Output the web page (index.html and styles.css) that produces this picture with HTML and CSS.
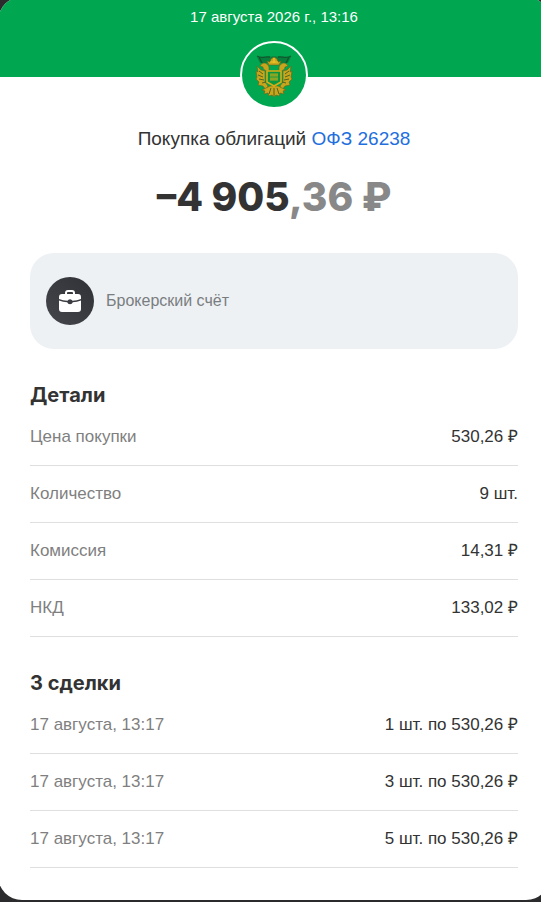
FILE: index.html
```html
<!DOCTYPE html>
<html lang="ru">
<head>
<meta charset="utf-8">
<meta name="viewport" content="width=device-width, initial-scale=1">
<title>Покупка облигаций</title>
<link rel="stylesheet" href="styles.css">
</head>
<body>
<main class="card">
  <header class="hero">
    <time class="hero-date">17 августа 2026 г., 13:16</time>
    <div class="emblem">
      <svg viewBox="0 0 64 64" width="64" height="64" aria-hidden="true">
        <path d="M15 14c5 2 8-1 12 0 4-1 6-1 10 0 4-1 7 2 12 0l-3 6H18z" fill="#07803c"/>
        <path d="M15 13c5 3 8 0 13 1M36 14c5-1 8 2 13-1M17 14l3 6M47 14l-3 6" fill="none" stroke="#12552d" stroke-width="1.3"/>
        <g fill="#c9a51d" stroke="#69671a" stroke-width=".6">
          <path d="M27 22l-2-4 3 1 1-3 3-2 3 2 1 3 3-1-2 4z"/>
          <path d="M27 24c-2-5-7-5-9-1l3 1c0 3 3 4 6 4zM37 24c2-5 7-5 9-1l-3 1c0 3-3 4-6 4z"/>
          <path d="M19 27l-4-4 1 6-2-1 1 6-1 2 3 3-1 3 5 1 3 4 2-4-3-4V28zM45 27l4-4-1 6 2-1-1 6 1 2-3 3 1 3-5 1-3 4-2-4 3-4V28z"/>
          <path d="M28 43l-8 4 3 1-1 3 4-1 1 3 3-1 2 2 2-2 3 1 1-3 4 1-1-3 3-1-8-4z"/>
        </g>
        <path d="M25 28h14v11l-7 4-7-4z" fill="#0b973f" stroke="#d9ad16" stroke-width="1.6"/>
        <path d="M29 30v8M31 30v8M33 30v8M35 30v8M28 32h8M28 36h8" fill="none" stroke="#d4ad18" stroke-width=".8"/>
        <path d="M17 28l4 3M16 32l5 2M17 36l5 1M20 40l4-1M47 28l-4 3M48 32l-5 2M47 36l-5 1M44 40l-4-1M29 45l-2 6M32 45v8M35 45l2 6" fill="none" stroke="#425e20" stroke-width=".9"/>
        <path d="M28 19h8M32 15v5" stroke="#f0c52a" stroke-width="1.2"/>
      </svg>
    </div>
  </header>
  <div class="content">
    <p class="title">Покупка облигаций <a href="#bond">ОФЗ 26238</a></p>
    <h1 class="amount">–4 905<span>,36 ₽</span></h1>
    <section class="account">
      <span class="account-icon">
        <svg viewBox="0 0 24 24" width="24" height="24" aria-hidden="true">
          <path d="M8 6V4q0-2 2-2h4q2 0 2 2v2" fill="none" stroke="#fff" stroke-width="2"/>
          <path d="M4 5h16q3 0 3 3v2q-4 1.500-8.500 1.800a2.800 2.800 0 0 0-5 0Q5 11.500 1 10V8q0-3 3-3z" fill="#fff"/>
          <path d="M1 11.500q4 1.500 8.200 1.700a2.900 2.900 0 0 0 5.600 0q4.200-.2 8.200-1.700V20q0 3-3 3H4q-3 0-3-3z" fill="#fff"/>
        </svg>
      </span>
      <span>Брокерский счёт</span>
    </section>
    <section class="group">
      <h2>Детали</h2>
      <dl>
        <div class="row"><dt>Цена покупки</dt><dd>530,26 ₽</dd></div>
        <div class="row"><dt>Количество</dt><dd>9 шт.</dd></div>
        <div class="row"><dt>Комиссия</dt><dd>14,31 ₽</dd></div>
        <div class="row"><dt>НКД</dt><dd>133,02 ₽</dd></div>
      </dl>
    </section>
    <section class="group">
      <h2>3 сделки</h2>
      <dl>
        <div class="row"><dt>17 августа, 13:17</dt><dd>1 шт. по 530,26 ₽</dd></div>
        <div class="row"><dt>17 августа, 13:17</dt><dd>3 шт. по 530,26 ₽</dd></div>
        <div class="row"><dt>17 августа, 13:17</dt><dd>5 шт. по 530,26 ₽</dd></div>
      </dl>
    </section>
  </div>
</main>
</body>
</html>
```
FILE: styles.css
```css
* {
  box-sizing: border-box;
}

body {
  margin: 0;
  overflow: hidden;
  background: #2b2b2d;
  color: #333;
  font-family: "Liberation Sans", Arial, sans-serif;
}

.card {
  margin: -3px -9px 2px -2px;
  border-radius: 24px;
  overflow: hidden;
  background: #fff;
}

.hero {
  display: flex;
  flex-direction: column;
  align-items: center;
  height: 80px;
  padding-top: 10px;
  background: #00a650;
}

.hero-date {
  color: #fff;
  font-size: 15px;
  line-height: 20px;
}

.emblem {
  flex: none;
  width: 68px;
  height: 68px;
  margin-top: 14px;
  border: 2px solid #fff;
  border-radius: 50%;
  background: #00a650;
}

.emblem svg {
  display: block;
}

.content {
  padding: 48px 32px 32px;
}

.title {
  margin: 0;
  font-size: 19px;
  line-height: 28px;
  text-align: center;
}

.title a {
  color: #1f6fde;
  text-decoration: none;
}

.amount {
  margin: 20px 0 32px;
  font-family: Inter, "Liberation Sans", sans-serif;
  font-size: 39px;
  font-weight: 800;
  line-height: 48px;
  text-align: center;
}

.amount span {
  color: #888;
}

.account {
  display: flex;
  align-items: center;
  gap: 12px;
  padding: 24px 16px;
  border-radius: 24px;
  background: #edf1f4;
  color: #7a7d80;
  font-size: 16px;
  line-height: 24px;
}

.account-icon {
  display: grid;
  place-items: center;
  width: 48px;
  height: 48px;
  border-radius: 50%;
  background: linear-gradient(45deg, #45464c, #303136);
}

.group {
  margin-top: 32px;
}

h2 {
  margin: 0;
  font-family: Inter, "Liberation Sans", sans-serif;
  font-size: 20px;
  font-weight: 700;
  line-height: 28px;
}

dl {
  margin: 0;
}

.row {
  display: flex;
  justify-content: space-between;
  gap: 16px;
  padding: 16px 0;
  border-bottom: 1px solid #dedfe0;
  font-size: 17px;
  line-height: 24px;
}

dt {
  color: #7f7f7f;
}

dd {
  margin: 0;
}
```
